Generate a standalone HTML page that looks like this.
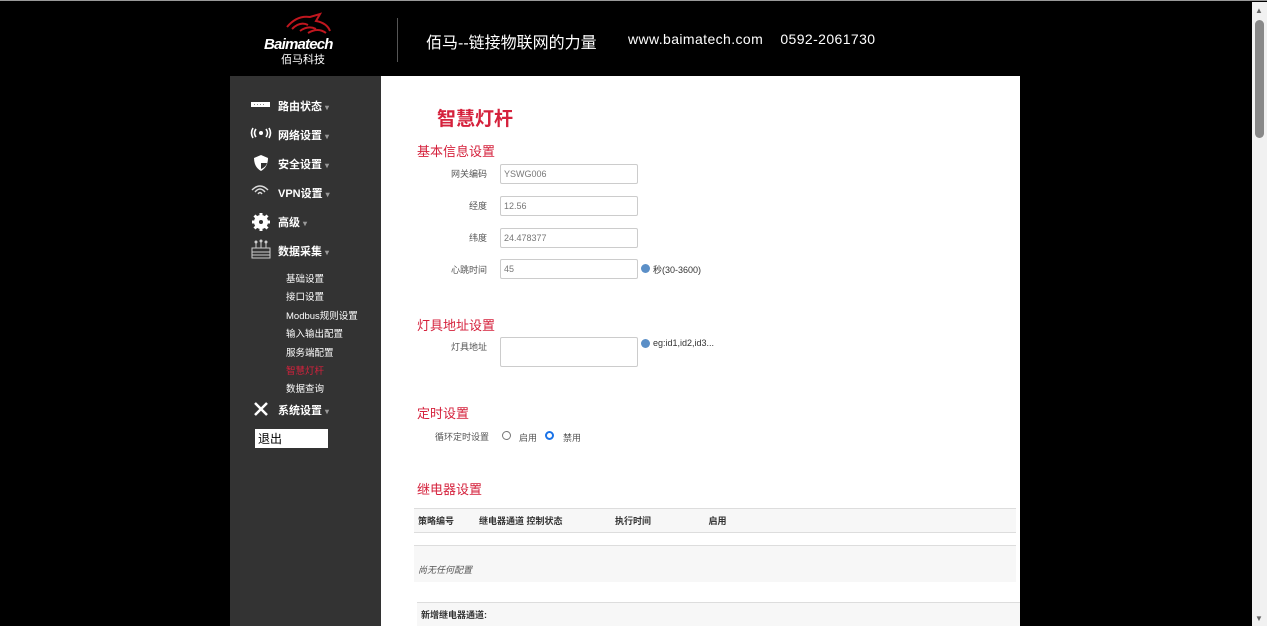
<!DOCTYPE html>
<html><head><meta charset="utf-8"><style>
*{margin:0;padding:0;box-sizing:border-box}
body{width:1267px;height:625px;overflow:hidden;background:#000;font-family:"Liberation Sans","Noto Sans CJK SC",sans-serif;position:relative;border-top:1px solid #999}
.a{position:absolute}
.side{left:230px;top:75px;width:151px;height:550px;background:#333}
.mi{position:absolute;left:48px;color:#fff;font-size:11px;font-weight:bold}
.mi i{font-style:normal;color:#999;font-size:8px;margin-left:3px}
.sub{position:absolute;left:56px;color:#fff;font-size:9.5px}
.lbl{position:absolute;font-size:9px;color:#555;text-align:right;width:80px}
.inp{position:absolute;left:500px;width:138px;height:20px;border:1px solid #ccc;border-radius:2px;font-size:9px;color:#777;padding:4px 3px}
.h{position:absolute;left:417px;color:#d5213c;font-size:13px}
.ic{position:absolute;left:20px}
</style></head><body>
<svg class="a" style="left:282px;top:10px" width="50" height="26"><path d="M5 16 Q15 4 28 6 L38 3 L34 10 Q45 12 48 20 M10 18 Q18 10 26 14 M18 20 Q26 14 34 18 M26 22 Q36 16 44 22" stroke="#c0161e" stroke-width="2" fill="none"/></svg>
<div class="a" style="left:264px;top:35px;color:#fff;font-size:15px;font-style:italic;font-weight:bold;letter-spacing:-0.8px">Baimatech</div>
<div class="a" style="left:281px;top:50px;color:#fff;font-size:11px">佰马科技</div>
<div class="a" style="left:397px;top:17px;width:1px;height:44px;background:#555"></div>
<div class="a" style="left:426px;top:28px;color:#fff;font-size:16px">佰马--链接物联网的力量</div>
<div class="a" style="left:628px;top:30px;color:#fff;font-size:14px;letter-spacing:0.4px">www.baimatech.com&nbsp;&nbsp;&nbsp; 0592-2061730</div>
<div class="a" style="left:1252px;top:1px;width:15px;height:624px;background:#f1f1f1"></div>
<div class="a" style="left:1255px;top:19px;width:9px;height:118px;background:#888;border-radius:5px"></div>
<div class="a" style="left:1255px;top:5px;color:#666;font-size:8px">▲</div>
<div class="a" style="left:1255px;top:613px;color:#666;font-size:8px">▼</div>

<div class="a side">
<svg class="ic" style="top:24px" width="22" height="10"><rect x="1" y="2" width="19" height="5" fill="#fff"/><line x1="4" y1="4.5" x2="16" y2="4.5" stroke="#888" stroke-dasharray="1 2"/></svg>
<div class="mi" style="top:22px">路由状态<i>▾</i></div>
<svg class="ic" style="top:51px" width="22" height="12"><circle cx="11" cy="6" r="2" fill="#fff"/><path d="M6 2 Q3 6 6 10 M16 2 Q19 6 16 10 M3 1 Q0 6 3 11 M19 1 Q22 6 19 11" stroke="#fff" stroke-width="1.6" fill="none"/></svg>
<div class="mi" style="top:51px">网络设置<i>▾</i></div>
<svg class="ic" style="top:78px;left:23px" width="16" height="18"><path d="M8 1 L15 4 Q15 13 8 17 Q1 13 1 4 Z" fill="#fff"/><path d="M8 3 L8 9 L14 9 Q13 13 8 15 Z" fill="#333"/></svg>
<div class="mi" style="top:80px">安全设置<i>▾</i></div>
<svg class="ic" style="top:108px" width="20" height="12"><path d="M2 6 Q10 -2 18 6 M5 8 Q10 2 15 8 M8 10 Q10 7 12 10" stroke="#ddd" stroke-width="1.4" fill="none"/></svg>
<div class="mi" style="top:109px">VPN设置<i>▾</i></div>
<svg class="ic" style="top:137px;left:22px" width="18" height="18"><circle cx="9" cy="9" r="5" fill="none" stroke="#fff" stroke-width="4"/><g stroke="#fff" stroke-width="3"><line x1="9" y1="0" x2="9" y2="18"/><line x1="0" y1="9" x2="18" y2="9"/><line x1="2.5" y1="2.5" x2="15.5" y2="15.5"/><line x1="15.5" y1="2.5" x2="2.5" y2="15.5"/></g><circle cx="9" cy="9" r="2" fill="#333"/></svg>
<div class="mi" style="top:138px">高级<i>▾</i></div>
<svg class="ic" style="top:163px" width="22" height="20"><path d="M2 9 H20 V19 H2 Z M2 13 H20 M2 16 H20 M6 9 V3 M11 9 V2 M16 9 V3" stroke="#ccc" stroke-width="1" fill="none"/><circle cx="6" cy="3" r="1.5" fill="#ccc"/><circle cx="11" cy="2" r="1.5" fill="#ccc"/><circle cx="16" cy="3" r="1.5" fill="#ccc"/></svg>
<div class="mi" style="top:167px">数据采集<i>▾</i></div>
<div class="sub" style="top:195px">基础设置</div>
<div class="sub" style="top:213px">接口设置</div>
<div class="sub" style="top:232px">Modbus规则设置</div>
<div class="sub" style="top:250px">输入输出配置</div>
<div class="sub" style="top:269px">服务端配置</div>
<div class="sub" style="top:287px;color:#d5213c">智慧灯杆</div>
<div class="sub" style="top:305px">数据查询</div>
<svg class="ic" style="top:325px;left:23px" width="16" height="16"><path d="M2 14 L14 2 M2 2 L14 14" stroke="#fff" stroke-width="2.5"/></svg>
<div class="mi" style="top:326px">系统设置<i>▾</i></div>
<div class="a" style="left:25px;top:353px;width:73px;height:19px;background:#fff;color:#000;font-size:12px;padding:1px 3px">退出</div>
</div>

<div class="a" style="left:381px;top:75px;width:639px;height:550px;background:#fff"></div>
<div class="a" style="left:437px;top:103px;color:#d5213c;font-size:19px;font-weight:bold">智慧灯杆</div>
<div class="h" style="top:140px">基本信息设置</div>
<div class="lbl" style="left:407px;top:166px">网关编码</div><div class="inp" style="top:163px">YSWG006</div>
<div class="lbl" style="left:407px;top:198px">经度</div><div class="inp" style="top:195px">12.56</div>
<div class="lbl" style="left:407px;top:230px">纬度</div><div class="inp" style="top:227px">24.478377</div>
<div class="lbl" style="left:407px;top:262px">心跳时间</div><div class="inp" style="top:258px">45</div>
<div class="a" style="left:641px;top:263px;width:9px;height:9px;border-radius:50%;background:#5b8fc7"></div>
<div class="a" style="left:653px;top:262px;font-size:9px;color:#333">秒(30-3600)</div>
<div class="h" style="top:314px">灯具地址设置</div>
<div class="lbl" style="left:407px;top:339px">灯具地址</div><div class="inp" style="top:336px;height:30px"></div>
<div class="a" style="left:641px;top:338px;width:9px;height:9px;border-radius:50%;background:#5b8fc7"></div>
<div class="a" style="left:653px;top:337px;font-size:9px;color:#333">eg:id1,id2,id3...</div>
<div class="h" style="top:402px">定时设置</div>
<div class="a" style="left:435px;top:429px;font-size:9px;color:#555">循环定时设置</div>
<div class="a" style="left:502px;top:430px;width:9px;height:9px;border:1px solid #777;border-radius:50%"></div>
<div class="a" style="left:519px;top:430px;font-size:9px;color:#555">启用</div>
<div class="a" style="left:545px;top:430px;width:9px;height:9px;border:2.5px solid #1a73e8;border-radius:50%"></div>
<div class="a" style="left:563px;top:430px;font-size:9px;color:#555">禁用</div>
<div class="h" style="top:478px">继电器设置</div>
<div class="a" style="left:414px;top:507px;width:602px;height:25px;background:#f7f7f7;border-top:1px solid #ddd;border-bottom:1px solid #ddd"></div>
<div class="a" style="left:418px;top:513px;font-size:9px;font-weight:bold;color:#333;white-space:pre">策略编号          继电器通道 控制状态                     执行时间                       启用</div>
<div class="a" style="left:414px;top:544px;width:602px;height:37px;background:#f7f7f7;border-top:1px solid #ddd"></div>
<div class="a" style="left:418px;top:562px;font-size:9px;font-style:italic;color:#555">尚无任何配置</div>
<div class="a" style="left:417px;top:601px;width:603px;height:24px;background:#f7f7f7;border-top:1px solid #ddd"></div>
<div class="a" style="left:421px;top:607px;font-size:9px;font-weight:bold;color:#333">新增继电器通道:</div>
</body></html>
